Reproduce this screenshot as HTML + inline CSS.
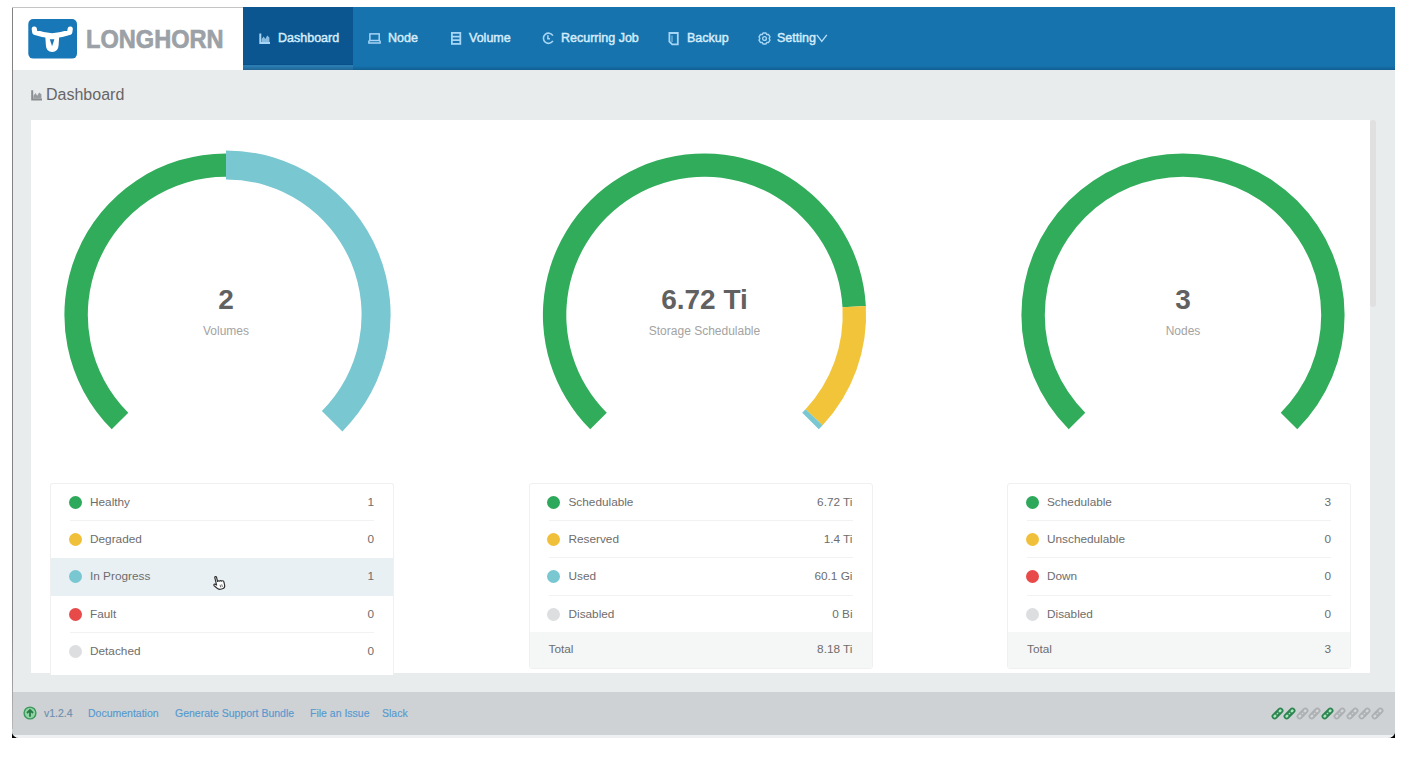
<!DOCTYPE html>
<html><head><meta charset="utf-8">
<style>
*{margin:0;padding:0;box-sizing:border-box}
html,body{width:1422px;height:768px;overflow:hidden;background:#fff;font-family:"Liberation Sans",sans-serif}
.abs{position:absolute}
#frame{position:absolute;left:12px;top:7px;width:1383px;height:731px;background:#e9eced;overflow:hidden;border-radius:0 0 7px 7px}
#bl{position:absolute;left:12px;top:7px;width:1px;height:722px;background:linear-gradient(#828282 85%,#b8b8b8);z-index:5}
#bt{position:absolute;left:12px;top:7px;width:231px;height:1px;background:#c4c4c4;z-index:5}
#hdr{position:absolute;left:0;top:0;width:1383px;height:63px;background:#1673ad}
#logo{position:absolute;left:0;top:0;width:231px;height:63px;background:#fff}
#active{position:absolute;left:231px;top:0;width:110px;height:58px;background:#0b5690;box-shadow:inset 0 -1px 0 #09508a}
#activeb{position:absolute;left:231px;top:58px;width:110px;height:5px;background:#2a7db2}
.nav{position:absolute;top:23px;color:#d5ecfc;font-size:12.5px;line-height:16px;white-space:nowrap;-webkit-text-stroke:0.45px #d5ecfc}
.nav svg{position:absolute}
#crumb{position:absolute;left:34px;top:79px;font-size:16px;color:#666;line-height:18px}
#card{position:absolute;left:19px;top:113px;width:1339px;height:553px;background:#fff}
#sb{position:absolute;left:1358px;top:113px;width:6px;height:187px;background:#e0e0e0;border-radius:3px}
.num{position:absolute;text-align:center;width:300px;font-weight:bold;color:#616161;font-size:28px;line-height:32px;margin-top:1px}
.lbl{position:absolute;text-align:center;width:300px;color:#a3a3a3;font-size:12px;line-height:14px}
.list{position:absolute;top:476px;width:344px;background:#fff;border:1px solid #f0f0f0;border-radius:3px;overflow:hidden}
.row{position:relative;height:37.2px;font-size:11.8px;color:#6d6d6d}
.row .sep{position:absolute;left:19px;right:19px;bottom:0;height:1px;background:#f2f2f2}
.row .dot{position:absolute;left:17.8px;top:12px;width:13px;height:13px;border-radius:50%}
.row .t{position:absolute;left:39px;top:11px;line-height:15px}
.row .v{position:absolute;right:19px;top:11px;line-height:15px}
.row.tot{background:#f5f6f6;margin-top:-1px;height:37px}
.row.tot .t,.row.tot .v{top:10.5px}
.row.tot .t{left:19px}
#foot{position:absolute;left:0;top:685px;width:1383px;height:43px;background:#ced2d5}
#fstrip{position:absolute;left:0;top:728px;width:1383px;height:3px;background:#eef0f1}
.corner{position:absolute;width:8px;height:8px;background:#000}
.fl{position:absolute;top:15px;font-size:10.5px;color:#5799cf;line-height:12px;white-space:nowrap;-webkit-text-stroke:0.15px #5799cf}
</style></head><body>
<div class="corner" style="left:12px;top:730px"></div><div class="corner" style="left:1387px;top:730px"></div><div id="bl"></div><div id="bt"></div>
<div id="frame">
  <div id="hdr">
    <div id="logo">
      <svg class="abs" style="left:16px;top:11.5px" width="50" height="41" viewBox="0 0 50 41">
        <rect x="0.3" y="0.1" width="48.7" height="39.5" rx="5" fill="#1877b6"/>
        <path d="M6.3 10 L6.8 13.3 Q15 16.3 24.2 16.8 Q33.4 16.3 41.7 13.3 L42.2 10" fill="none" stroke="#fff" stroke-width="5.2" stroke-linecap="round" stroke-linejoin="round"/>
        <path d="M17.2 16 L17.9 26.5 Q18.3 33 24.2 33 Q30.1 33 30.6 26.5 L31.3 16 Z" fill="#fff"/>
        <path d="M21.8 20.3 L26.4 20.3 L24.1 27.2 Z" fill="#1877b6"/>
      </svg>
      <div class="abs" style="left:74px;top:17px;font-size:26.5px;font-weight:bold;color:#9ba1a6;line-height:30px;transform:scaleX(0.89);transform-origin:0 0;-webkit-text-stroke:0.7px #9ba1a6;left:74.4px">LONGHORN</div>
    </div>
    <div id="active"></div><div id="activeb"></div><div style="position:absolute;left:231px;top:59px;width:1152px;height:4px;background:linear-gradient(rgba(0,20,50,0),rgba(0,20,50,0.22))"></div>
    <!-- nav items -->
    <svg class="abs" style="left:246.5px;top:25.5px" width="12" height="11" viewBox="0 0 12 11"><path d="M1.3 0.4V9.9H11" fill="none" stroke="#a6d5f6" stroke-width="2"/><path d="M2.6 8.9V6.1L4.7 3.4L6.3 6.1L8.2 2.6L10.4 4.6V8.9Z" fill="#a6d5f6" opacity="0.8"/></svg>
    <div class="nav" style="left:266px">Dashboard</div>
    <svg class="abs" style="left:356px;top:25.5px" width="13" height="11" viewBox="0 0 13 11" fill="none" stroke="#a6d5f6" stroke-width="1.5"><rect x="1.9" y="0.9" width="9.3" height="6.6"/><path d="M0.9 7.5V10H12.1V7.5"/></svg>
    <div class="nav" style="left:376px">Node</div>
    <svg class="abs" style="left:439px;top:24.8px" width="11" height="14" viewBox="0 0 11 14" fill="none" stroke="#a6d5f6" stroke-width="1.8"><rect x="0.9" y="0.9" width="8.4" height="11"/><path d="M0.9 4.6h8.4M0.9 8.2h8.4"/></svg>
    <div class="nav" style="left:457px">Volume</div>
    <svg class="abs" style="left:529.5px;top:25px" width="13" height="13" viewBox="0 0 13 13" fill="none" stroke="#a6d5f6" stroke-width="1.6"><path d="M10.9 3.6A5.1 5.1 0 1 0 10.9 8.9"/><path d="M5.9 3.2V6.7H8"/></svg>
    <div class="nav" style="left:549px">Recurring Job</div>
    <svg class="abs" style="left:655.5px;top:24.8px" width="12" height="14" viewBox="0 0 12 14" fill="none" stroke="#a6d5f6" stroke-width="1.8"><path d="M1.4 1H9.8V12.4H4.2L1.4 9.6Z"/><path d="M4 3.4V10" stroke-width="1.4" opacity="0.6"/></svg>
    <div class="nav" style="left:675px">Backup</div>
    <svg class="abs" style="left:746px;top:24.8px" width="13" height="13" viewBox="0 0 13 13" fill="none" stroke="#a6d5f6" stroke-width="1.4"><path d="M4.20 2.52 L5.12 0.97 L7.88 0.97 L8.80 2.52 L8.80 2.52 L10.60 2.54 L11.98 4.93 L11.10 6.50 L11.10 6.50 L11.98 8.07 L10.60 10.46 L8.80 10.48 L8.80 10.48 L7.88 12.03 L5.12 12.03 L4.20 10.48 L4.20 10.48 L2.40 10.46 L1.02 8.07 L1.90 6.50 L1.90 6.50 L1.02 4.93 L2.40 2.54 L4.20 2.52Z" stroke-linejoin="round"/><circle cx="6.5" cy="6.5" r="1.9"/></svg>
    <div class="nav" style="left:765px">Setting</div>
    <svg class="abs" style="left:804px;top:26.8px" width="12" height="9" viewBox="0 0 12 9" fill="none" stroke="#b5dcf8" stroke-width="1.4"><path d="M0.8 0.9L5.8 7.4L10.8 0.9"/></svg>
  </div>

  <div id="crumb">
    <svg style="position:absolute;left:-15.5px;top:3.5px" width="12" height="11" viewBox="0 0 12 11"><path d="M1.2 0.3V9.6H11" fill="none" stroke="#8a8d90" stroke-width="2"/><path d="M2.4 8.6V5.8L4.5 3.1L6.2 5.8L8.1 2.4L10.4 4.2V8.6Z" fill="#8a8d90" opacity="0.85"/></svg>
    <span style="position:absolute;left:0;white-space:nowrap">Dashboard</span>
  </div>

  <div id="card"></div>
  <div id="sb"></div>

  <svg class="abs" style="left:-12px;top:-7px" width="1422" height="768" viewBox="0 0 1422 768">
<path fill="#31ac5b" d="M111.73 429.27A161.6 161.6 0 0 1 226.00 153.40L226.00 176.80A138.2 138.2 0 0 0 128.28 412.72Z"/>
<path fill="#79c7d1" d="M226.00 150.40A164.6 164.6 0 0 1 342.39 431.39L321.88 410.88A135.6 135.6 0 0 0 226.00 179.40Z"/>
<path fill="#31ac5b" d="M590.23 429.27A161.6 161.6 0 1 1 865.85 306.01L842.49 307.31A138.2 138.2 0 1 0 606.78 412.72Z"/>
<path fill="#f1c43a" d="M865.85 306.01A161.6 161.6 0 0 1 822.65 425.25L805.54 409.29A138.2 138.2 0 0 0 842.49 307.31Z"/>
<path fill="#79c7d1" d="M822.65 425.25A161.6 161.6 0 0 1 818.77 429.27L802.22 412.72A138.2 138.2 0 0 0 805.54 409.29Z"/>
<path fill="#31ac5b" d="M1068.73 429.27A161.6 161.6 0 1 1 1297.27 429.27L1280.72 412.72A138.2 138.2 0 1 0 1085.28 412.72Z"/>
  </svg>

  <div class="num" style="left:64px;top:276px">2</div>
  <div class="lbl" style="left:64px;top:317px">Volumes</div>
  <div class="num" style="left:542.5px;top:276px">6.72 Ti</div>
  <div class="lbl" style="left:542.5px;top:317px">Storage Schedulable</div>
  <div class="num" style="left:1021px;top:276px">3</div>
  <div class="lbl" style="left:1021px;top:317px">Nodes</div>

  <div class="list" style="left:38px;height:192px;border-bottom:none;border-radius:3px 3px 0 0">
    <div class="row"><div class="dot" style="background:#2ea85a"></div><div class="t">Healthy</div><div class="v">1</div><div class="sep"></div></div>
    <div class="row"><div class="dot" style="background:#f0c03a"></div><div class="t">Degraded</div><div class="v">0</div></div>
    <div class="row" style="background:#e9f0f4"><div class="dot" style="background:#79c7d1"></div><div class="t">In Progress</div><div class="v">1</div></div>
    <div class="row"><div class="dot" style="background:#e84a4a"></div><div class="t">Fault</div><div class="v">0</div><div class="sep"></div></div>
    <div class="row"><div class="dot" style="background:#dcdee0"></div><div class="t">Detached</div><div class="v">0</div></div>
  </div>

  <div class="list" style="left:516.5px;height:186px">
    <div class="row"><div class="dot" style="background:#2ea85a"></div><div class="t">Schedulable</div><div class="v">6.72 Ti</div><div class="sep"></div></div>
    <div class="row"><div class="dot" style="background:#f0c03a"></div><div class="t">Reserved</div><div class="v">1.4 Ti</div><div class="sep"></div></div>
    <div class="row"><div class="dot" style="background:#79c7d1"></div><div class="t">Used</div><div class="v">60.1 Gi</div><div class="sep"></div></div>
    <div class="row"><div class="dot" style="background:#dcdee0"></div><div class="t">Disabled</div><div class="v">0 Bi</div></div>
    <div class="row tot"><div class="t">Total</div><div class="v">8.18 Ti</div></div>
  </div>

  <div class="list" style="left:995px;height:186px">
    <div class="row"><div class="dot" style="background:#2ea85a"></div><div class="t">Schedulable</div><div class="v">3</div><div class="sep"></div></div>
    <div class="row"><div class="dot" style="background:#f0c03a"></div><div class="t">Unschedulable</div><div class="v">0</div><div class="sep"></div></div>
    <div class="row"><div class="dot" style="background:#e84a4a"></div><div class="t">Down</div><div class="v">0</div><div class="sep"></div></div>
    <div class="row"><div class="dot" style="background:#dcdee0"></div><div class="t">Disabled</div><div class="v">0</div></div>
    <div class="row tot"><div class="t">Total</div><div class="v">3</div></div>
  </div>

  <svg class="abs" style="left:198.5px;top:568px;z-index:9" width="16" height="16" viewBox="0 0 16 16"><g transform="rotate(-14 8 8)"><path d="M5.2 1.6C5.2 0.7 7 0.7 7 1.6L7 6.2C7.6 5.7 8.6 5.7 9 6.4C9.6 5.9 10.6 6 11 6.8C11.7 6.4 13 6.7 13 7.8L13 10.6C13 12.6 11.7 14.4 9.9 14.4L8 14.4C6.6 14.4 5.8 13.6 5 12.6L2.6 9.4C2.1 8.6 3 7.6 3.9 8.2L5.2 9.4Z" fill="#fff" stroke="#333" stroke-width="1.2" stroke-linejoin="round"/><path d="M8.6 10v2.6M10.3 10v2.6" stroke="#555" stroke-width="0.8"/></g></svg>
  <div id="fstrip"></div>
  <div id="foot">
    <svg class="abs" style="left:11px;top:14px" width="14" height="14" viewBox="0 0 14 14"><circle cx="7" cy="7" r="5.9" fill="#8ed5a3" stroke="#3b985a" stroke-width="1.4"/><path d="M7 10.8V4.2M4 7L7 4 10 7" fill="none" stroke="#2a7a47" stroke-width="1.8"/></svg>
    <div class="fl" style="left:32px;color:#6f8fae;-webkit-text-stroke-color:#6f8fae">v1.2.4</div>
    <div class="fl" style="left:76px">Documentation</div>
    <div class="fl" style="left:163px">Generate Support Bundle</div>
    <div class="fl" style="left:298px">File an Issue</div>
    <div class="fl" style="left:370px">Slack</div>
    <svg class="abs" style="left:1258.60px;top:14.5px" width="13" height="13" viewBox="0 0 13 13"><g transform="rotate(-45 6.5 6.5)"><rect x="-0.6" y="3.4" width="14.2" height="6.2" rx="3.1" fill="#2e8450"/><ellipse cx="2.8" cy="6.5" rx="1.7" ry="1.4" fill="#a8e6bd"/><ellipse cx="10.2" cy="6.5" rx="1.7" ry="1.4" fill="#a8e6bd"/><rect x="5.3" y="5.9" width="2.4" height="1.2" rx="0.6" fill="#a8e6bd"/></g></svg>
    <svg class="abs" style="left:1271.15px;top:14.5px" width="13" height="13" viewBox="0 0 13 13"><g transform="rotate(-45 6.5 6.5)"><rect x="-0.6" y="3.4" width="14.2" height="6.2" rx="3.1" fill="#2e8450"/><ellipse cx="2.8" cy="6.5" rx="1.7" ry="1.4" fill="#a8e6bd"/><ellipse cx="10.2" cy="6.5" rx="1.7" ry="1.4" fill="#a8e6bd"/><rect x="5.3" y="5.9" width="2.4" height="1.2" rx="0.6" fill="#a8e6bd"/></g></svg>
    <svg class="abs" style="left:1283.70px;top:14.5px" width="13" height="13" viewBox="0 0 13 13"><g transform="rotate(-45 6.5 6.5)"><rect x="-0.6" y="3.4" width="14.2" height="6.2" rx="3.1" fill="#acb0b3"/><ellipse cx="2.8" cy="6.5" rx="1.7" ry="1.4" fill="#d2d5d7"/><ellipse cx="10.2" cy="6.5" rx="1.7" ry="1.4" fill="#d2d5d7"/><rect x="5.3" y="5.9" width="2.4" height="1.2" rx="0.6" fill="#d2d5d7"/></g></svg>
    <svg class="abs" style="left:1296.25px;top:14.5px" width="13" height="13" viewBox="0 0 13 13"><g transform="rotate(-45 6.5 6.5)"><rect x="-0.6" y="3.4" width="14.2" height="6.2" rx="3.1" fill="#acb0b3"/><ellipse cx="2.8" cy="6.5" rx="1.7" ry="1.4" fill="#d2d5d7"/><ellipse cx="10.2" cy="6.5" rx="1.7" ry="1.4" fill="#d2d5d7"/><rect x="5.3" y="5.9" width="2.4" height="1.2" rx="0.6" fill="#d2d5d7"/></g></svg>
    <svg class="abs" style="left:1308.80px;top:14.5px" width="13" height="13" viewBox="0 0 13 13"><g transform="rotate(-45 6.5 6.5)"><rect x="-0.6" y="3.4" width="14.2" height="6.2" rx="3.1" fill="#2e8450"/><ellipse cx="2.8" cy="6.5" rx="1.7" ry="1.4" fill="#a8e6bd"/><ellipse cx="10.2" cy="6.5" rx="1.7" ry="1.4" fill="#a8e6bd"/><rect x="5.3" y="5.9" width="2.4" height="1.2" rx="0.6" fill="#a8e6bd"/></g></svg>
    <svg class="abs" style="left:1321.35px;top:14.5px" width="13" height="13" viewBox="0 0 13 13"><g transform="rotate(-45 6.5 6.5)"><rect x="-0.6" y="3.4" width="14.2" height="6.2" rx="3.1" fill="#acb0b3"/><ellipse cx="2.8" cy="6.5" rx="1.7" ry="1.4" fill="#d2d5d7"/><ellipse cx="10.2" cy="6.5" rx="1.7" ry="1.4" fill="#d2d5d7"/><rect x="5.3" y="5.9" width="2.4" height="1.2" rx="0.6" fill="#d2d5d7"/></g></svg>
    <svg class="abs" style="left:1333.90px;top:14.5px" width="13" height="13" viewBox="0 0 13 13"><g transform="rotate(-45 6.5 6.5)"><rect x="-0.6" y="3.4" width="14.2" height="6.2" rx="3.1" fill="#acb0b3"/><ellipse cx="2.8" cy="6.5" rx="1.7" ry="1.4" fill="#d2d5d7"/><ellipse cx="10.2" cy="6.5" rx="1.7" ry="1.4" fill="#d2d5d7"/><rect x="5.3" y="5.9" width="2.4" height="1.2" rx="0.6" fill="#d2d5d7"/></g></svg>
    <svg class="abs" style="left:1346.45px;top:14.5px" width="13" height="13" viewBox="0 0 13 13"><g transform="rotate(-45 6.5 6.5)"><rect x="-0.6" y="3.4" width="14.2" height="6.2" rx="3.1" fill="#acb0b3"/><ellipse cx="2.8" cy="6.5" rx="1.7" ry="1.4" fill="#d2d5d7"/><ellipse cx="10.2" cy="6.5" rx="1.7" ry="1.4" fill="#d2d5d7"/><rect x="5.3" y="5.9" width="2.4" height="1.2" rx="0.6" fill="#d2d5d7"/></g></svg>
    <svg class="abs" style="left:1359.00px;top:14.5px" width="13" height="13" viewBox="0 0 13 13"><g transform="rotate(-45 6.5 6.5)"><rect x="-0.6" y="3.4" width="14.2" height="6.2" rx="3.1" fill="#acb0b3"/><ellipse cx="2.8" cy="6.5" rx="1.7" ry="1.4" fill="#d2d5d7"/><ellipse cx="10.2" cy="6.5" rx="1.7" ry="1.4" fill="#d2d5d7"/><rect x="5.3" y="5.9" width="2.4" height="1.2" rx="0.6" fill="#d2d5d7"/></g></svg>
  </div>
</div>
</body></html>
